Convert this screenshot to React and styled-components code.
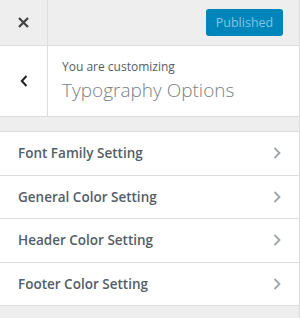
import React from 'react'
import styled, { createGlobalStyle } from 'styled-components'

const GlobalStyle = createGlobalStyle`
  html, body { margin: 0; padding: 0; background: #eeeeee; }
  body { font-family: "Open Sans", "Noto Sans", sans-serif; }
`

const Sidebar = styled.div`
  width: 300px;
  height: 318px;
  box-sizing: border-box;
  background: #eeeeee;
  border-right: 1px solid #dddddd;
  overflow: hidden;
`

const Header = styled.div`
  display: flex;
  align-items: stretch;
  height: 45px;
  border-bottom: 1px solid #dddddd;
`

const IconCell = styled.button`
  width: 48px;
  flex: none;
  display: flex;
  align-items: center;
  justify-content: center;
  padding: 0;
  background: transparent;
  border: 0;
  border-right: 1px solid #dddddd;
  color: #444444;
  box-sizing: border-box;
`

const HeaderActions = styled.div`
  flex: 1;
  display: flex;
  align-items: center;
  justify-content: flex-end;
  padding-right: 16px;
`

const PublishButton = styled.button`
  width: 77px;
  height: 27px;
  border: 0;
  border-radius: 3px;
  background: #0085ba;
  color: #7fc6e6;
  font-family: inherit;
  font-size: 12.5px;
  padding: 0;
`

const Section = styled.div`
  display: flex;
  height: 70px;
  background: #ffffff;
  border-bottom: 1px solid #dddddd;
`

const SectionTitle = styled.div`
  display: flex;
  flex-direction: column;
  justify-content: center;
  padding-left: 14px;
  color: #555d66;
`

const Caption = styled.span`
  font-size: 12px;
  line-height: 16px;
  color: #555d66;
`

const Title = styled.span`
  font-size: 19px;
  font-weight: 300;
  line-height: 26px;
  color: #7a7f84;
  margin-top: 2px;
`

const List = styled.ul`
  list-style: none;
  margin: 14px 0 0;
  padding: 0;
  border-top: 1px solid #dddddd;
`

const Item = styled.li`
  display: flex;
  align-items: center;
  justify-content: space-between;
  height: 42.5px;
  padding: 0 17px 0 18px;
  background: #ffffff;
  border-bottom: 1px solid #dddddd;
  font-size: 13.5px;
  font-weight: 600;
  color: #555d66;
`

const Chevron = () => (
  <svg width="9" height="12" viewBox="0 0 9 12">
    <path d="M1.5 1 L6.5 6 L1.5 11" fill="none" stroke="#a0a5aa" strokeWidth="1.8" />
  </svg>
)

const items = ['Font Family Setting', 'General Color Setting', 'Header Color Setting', 'Footer Color Setting']

export default function App() {
  return (
    <>
      <GlobalStyle />
      <Sidebar>
        <Header>
          <IconCell aria-label="Close">
            <svg width="11" height="11" viewBox="0 0 11 11">
              <path d="M1 1 L10 10 M10 1 L1 10" stroke="#444" strokeWidth="2.3" />
            </svg>
          </IconCell>
          <HeaderActions>
            <PublishButton disabled>Published</PublishButton>
          </HeaderActions>
        </Header>
        <Section>
          <IconCell aria-label="Back">
            <svg width="8" height="12" viewBox="0 0 8 12">
              <path d="M6.5 1 L1.8 6 L6.5 11" fill="none" stroke="#222" strokeWidth="2" />
            </svg>
          </IconCell>
          <SectionTitle>
            <Caption>You are customizing</Caption>
            <Title>Typography Options</Title>
          </SectionTitle>
        </Section>
        <List>
          {items.map((label) => (
            <Item key={label}>
              {label}
              <Chevron />
            </Item>
          ))}
        </List>
      </Sidebar>
    </>
  )
}
